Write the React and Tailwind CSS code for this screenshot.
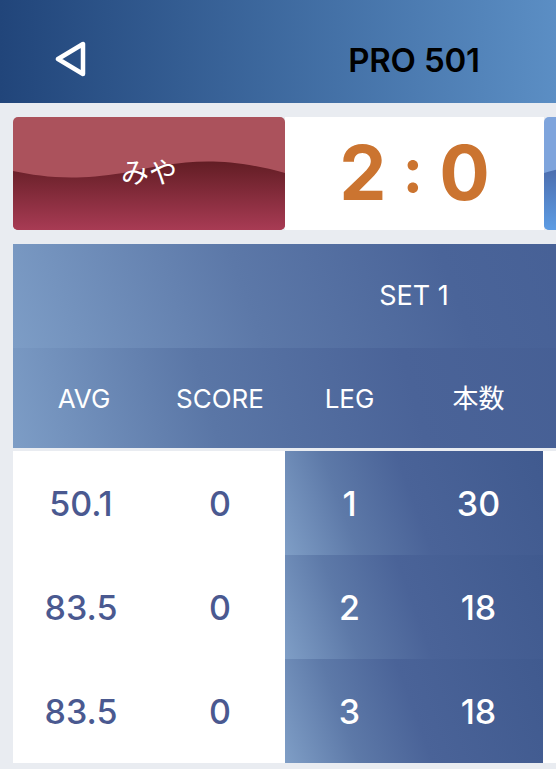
import React from "react";

const FONT = { fontFamily: 'Inter, "Noto Sans CJK JP", "Liberation Sans", sans-serif' };

const rows = [
  { avg: "50.1", score: "0", leg: "1", darts: "30" },
  { avg: "83.5", score: "0", leg: "2", darts: "18" },
  { avg: "83.5", score: "0", leg: "3", darts: "18" },
];

function BackIcon() {
  return (
    <svg width="36" height="40" viewBox="0 0 36 40" fill="none">
      <path
        d="M6 18 L31 3 L31 33 Z"
        stroke="white"
        strokeWidth="4.5"
        strokeLinejoin="round"
        strokeLinecap="round"
      />
    </svg>
  );
}

function WaveCard({ id, name, top, bandFrom, bandTo, mirror }) {
  return (
    <div
      className="relative h-full w-[272px] shrink-0 overflow-hidden rounded-[5px]"
      style={{ backgroundColor: top }}
    >
      <svg
        className="absolute inset-0"
        width="272"
        height="113"
        viewBox="0 0 272 113"
        preserveAspectRatio="none"
        style={mirror ? { transform: "scaleX(-1)" } : undefined}
      >
        <defs>
          <linearGradient id={`band-${id}`} x1="0" y1="0" x2="0" y2="1">
            <stop offset="0" stopColor={bandFrom} />
            <stop offset="1" stopColor={bandTo} />
          </linearGradient>
        </defs>
        <path
          d="M0 54 C 30 60, 60 64, 110 56 C 160 46, 200 36, 272 56 L272 113 L0 113 Z"
          fill={`url(#band-${id})`}
        />
      </svg>
      {name && (
        <div className="relative flex h-full items-center justify-center pb-[1px] text-[28px] text-white">
          {name}
        </div>
      )}
    </div>
  );
}

export default function App() {
  return (
    <div className="h-[769px] w-[556px] overflow-hidden bg-[#e9ecf1]" style={FONT}>
      <div className="w-[828px]">
        {/* top bar */}
        <div className="relative flex h-[103px] items-center justify-center pt-[18px] bg-[linear-gradient(90deg,#21457a_0px,#5b8ec4_556px,#6aa0d6_828px)]">
          <div className="absolute left-[52px] top-[41px]">
            <BackIcon />
          </div>
          <div className="text-[33px] font-semibold tracking-[-0.2px] text-black">PRO 501</div>
        </div>

        {/* score line */}
        <div className="mx-[13px] mt-[14px] flex h-[113px]">
          <WaveCard id="p1" name="みや" top="#ab525c" bandFrom="#621d24" bandTo="#a83b54" />
          <div className="flex w-[259px] shrink-0 items-center justify-center bg-white pb-[2px] text-[75px] font-bold leading-none text-[#cb7430]">
            <span>2</span>
            <span className="mx-[16px] -mt-[6px] text-[62px]">:</span>
            <span>0</span>
          </div>
          <WaveCard id="p2" top="#7ea4dc" bandFrom="#4a68a8" bandTo="#5c9ce4" mirror />
        </div>

        {/* leg table */}
        <div className="mx-[13px] mt-[14px]">
          <div className="flex h-[104px] items-center justify-center bg-[linear-gradient(70deg,#7d9dc6_0%,#5c78a8_30%,#4a6499_55%,#405a91_100%)] text-[27px] text-white">
            SET 1
          </div>
          <div className="grid h-[100px] grid-cols-[136px_136px_129px_129px_272px] items-center bg-[linear-gradient(75deg,#7d9dc6_0%,#5a76a6_25%,#4a6398_50%,#405a90_100%)] text-center text-[26px] text-white">
            <div className="pl-[6px]">AVG</div>
            <div className="pl-[6px]">SCORE</div>
            <div>LEG</div>
            <div>本数</div>
            <div />
          </div>

          <div className="mt-[3px] bg-white">
            {rows.map((r) => (
              <div
                key={r.leg}
                className="grid h-[104px] grid-cols-[136px_136px_258px_272px] items-center text-center text-[34px] font-medium text-[#4a5990]"
              >
                <div>{r.avg}</div>
                <div className="pl-[6px]">{r.score}</div>
                <div className="grid h-full grid-cols-2 items-center bg-[linear-gradient(70deg,#7f9ec6_0%,#5d79a8_25%,#4a6398_50%,#405a8f_100%)] text-white">
                  <div>{r.leg}</div>
                  <div>{r.darts}</div>
                </div>
                <div />
              </div>
            ))}
          </div>
        </div>
      </div>
    </div>
  );
}
